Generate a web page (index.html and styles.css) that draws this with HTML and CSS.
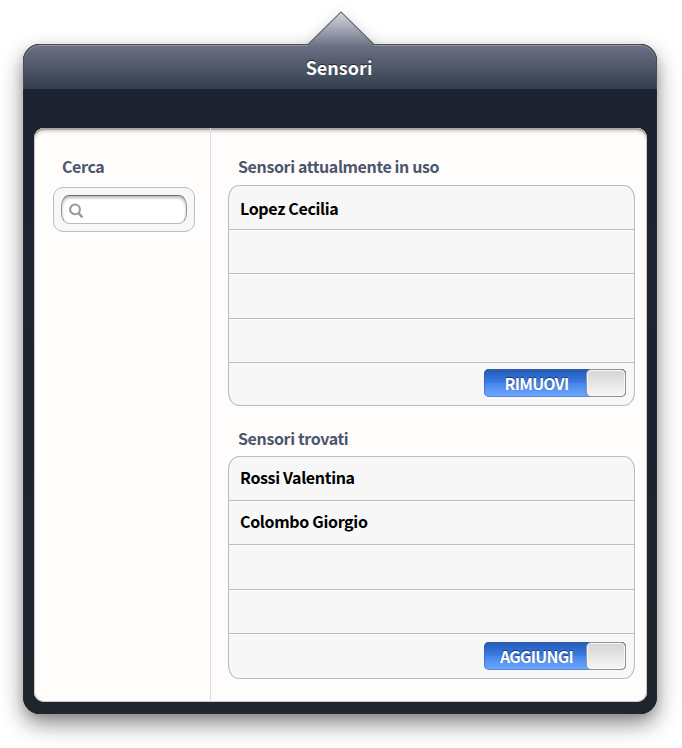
FILE: index.html
```html
<!DOCTYPE html>
<html lang="it">
<head>
<meta charset="utf-8">
<title>Sensori</title>
<link rel="stylesheet" href="styles.css">
</head>
<body>
<main class="popover">
  <svg class="arrow" width="70" height="36" viewBox="0 0 70 36" aria-hidden="true">
    <defs>
      <linearGradient id="tip" x1="0" y1="0" x2="0" y2="1">
        <stop offset="0" stop-color="#d6d7dc"/>
        <stop offset=".45" stop-color="#a9abb7"/>
        <stop offset="1" stop-color="#6c7184"/>
      </linearGradient>
    </defs>
    <path d="M2 33.5 35 .9 68 33.5V35H2Z" fill="url(#tip)"/>
    <path d="M2 33.5 35 .9 68 33.5" fill="none" stroke="#5d6068" stroke-width="1.1"/>
  </svg>
  <header class="title-bar"><h1>Sensori</h1></header>
  <div class="content">
    <aside class="sidebar">
      <h2>Cerca</h2>
      <div class="search-group">
        <div class="search-field">
          <svg width="16" height="16" viewBox="0 0 16 16" fill="none" stroke="#949a9e" aria-hidden="true">
            <circle cx="7" cy="6.4" r="4.9" stroke-width="2.1"/>
            <path d="m10.4 10 4 4.3" stroke-width="2.5"/>
          </svg>
        </div>
      </div>
    </aside>
    <section class="lists">
      <h2>Sensori attualmente in uso</h2>
      <ul class="table in-use">
        <li>Lopez Cecilia</li>
        <li></li>
        <li></li>
        <li></li>
        <li class="action"><div class="switch"><span>RIMUOVI</span><i></i></div></li>
      </ul>
      <h2>Sensori trovati</h2>
      <ul class="table found">
        <li>Rossi Valentina</li>
        <li>Colombo Giorgio</li>
        <li></li>
        <li></li>
        <li class="action"><div class="switch"><span>AGGIUNGI</span><i></i></div></li>
      </ul>
    </section>
  </div>
</main>
</body>
</html>
```
FILE: styles.css
```css
* { box-sizing: border-box; }
body {
  margin: 0;
  height: 748px;
  padding: 44px 25px 0 23px;
  overflow: hidden;
  background: #fff;
  font: bold 16px/20px "Noto Sans CJK JP", "Noto Sans", sans-serif;
  letter-spacing: -.33px;
}
h1, h2, ul { margin: 0; padding: 0; font-size: inherit; }
.popover {
  position: relative;
  height: 670px;
  padding: 0 10px 0 11px;
  border-radius: 17px;
  background: linear-gradient(#1c2330, #1d2330 20%, #1f252d);
  box-shadow: inset 0 0 0 1px #25292e, inset 0 -1px #000,
    0 10px 22px rgba(0, 0, 0, .45), 0 3px 8px rgba(0, 0, 0, .12);
}
.arrow {
  position: absolute;
  z-index: 1;
  left: 283px;
  top: -33px;
  filter: drop-shadow(0 3px 7px rgba(0, 0, 0, .18));
  clip-path: polygon(-20px -20px, 90px -20px, 90px 33px, 68px 33px, 68px 35px, 2px 35px, 2px 33px, -20px 33px);
}
.title-bar {
  height: 45px;
  margin: 0 -10px 0 -11px;
  padding-top: 12px;
  border: solid #4b4e53;
  border-width: 1px 1px 0;
  border-radius: 17px 17px 0 0;
  background: linear-gradient(#6c7084, #525a6c 45%, #343e4f);
  box-shadow: inset 0 1px #9497a2;
  color: #fff;
  font-size: 18px;
  letter-spacing: 0;
  text-align: center;
  text-shadow: 0 -1px 1px rgba(0, 0, 0, .65);
}
.title-bar h1 { padding-right: 2px; line-height: 20px; }
.content {
  display: flex;
  height: 574px;
  margin-top: 39px;
  border-radius: 10px;
  background: #fefdfc;
  box-shadow: inset 0 2px 1px #a9a3a3, inset 0 4px 3px #dcd9d9, inset 0 0 0 1px #c9c7c7;
}
h2 {
  height: 20px;
  color: #4c566c;
  letter-spacing: -.38px;
}
.sidebar {
  width: 177px;
  padding: 28px 15px 0 19px;
  border-right: 1px solid #dcdcdd;
}
.sidebar h2 { padding-left: 9px; }
.search-group {
  height: 45px;
  width: 142px;
  margin-top: 11px;
  padding: 7px;
  border: 1px solid #bdbdbd;
  border-radius: 10px;
  background: #f7f7f7;
}
.search-field {
  height: 29px;
  padding: 7px 6px;
  border: 1px solid #939496;
  border-top-color: #6e6f71;
  border-bottom-color: #bcbdbe;
  border-radius: 8px / 11px;
  background: #fff;
  box-shadow: inset 0 2px 3px rgba(0, 0, 0, .28);
  line-height: 0;
}
.lists {
  flex: 1;
  padding: 28px 12px 0 17px;
}
.lists h2 { padding-left: 10px; }
.table {
  display: grid;
  grid-template-rows: 44px 44px 45px 44px 1fr;
  list-style: none;
  border: 1px solid #bcbcbd;
  border-radius: 11px / 14px;
  background: #f7f7f7;
  color: #000;
}
.table li {
  padding: 12px 0 0 11px;
  border-bottom: 1px solid #bcbcbd;
}
.table li + li { box-shadow: inset 0 1px #fcfcfc; }
.table li:last-child { border-bottom: 0; box-shadow: none; }
.in-use { height: 221px; margin: 9px 0 22px; }
.found { height: 223px; margin-top: 8px; }
.found li { padding-top: 10px; }
.table .action {
  display: flex;
  justify-content: flex-end;
  padding: 6px 8px 0 0;
}
.found .action { padding-top: 8px; }
.switch {
  display: flex;
  width: 142px;
  height: 28px;
  border-radius: 5px;
  background: linear-gradient(#2359b7, #3a7be2 48%, #4787ee 52%, #70a7fc);
  box-shadow: inset 0 1px 1px #3b5f9c, inset 0 0 0 1px rgba(50, 90, 160, .4);
  color: #fff;
  font-size: 16px;
  letter-spacing: -.75px;
  line-height: 29px;
  text-shadow: 0 -1px 1px rgba(0, 0, 0, .5);
}
.switch span { flex: 1; padding-left: 3px; text-align: center; }
.switch i {
  width: 40px;
  border: 1px solid #8e949c;
  border-radius: 5px;
  background: linear-gradient(#d5d5d6, #f6f6f6);
  box-shadow: inset 0 0 0 1px #f8f8f8;
}
```
